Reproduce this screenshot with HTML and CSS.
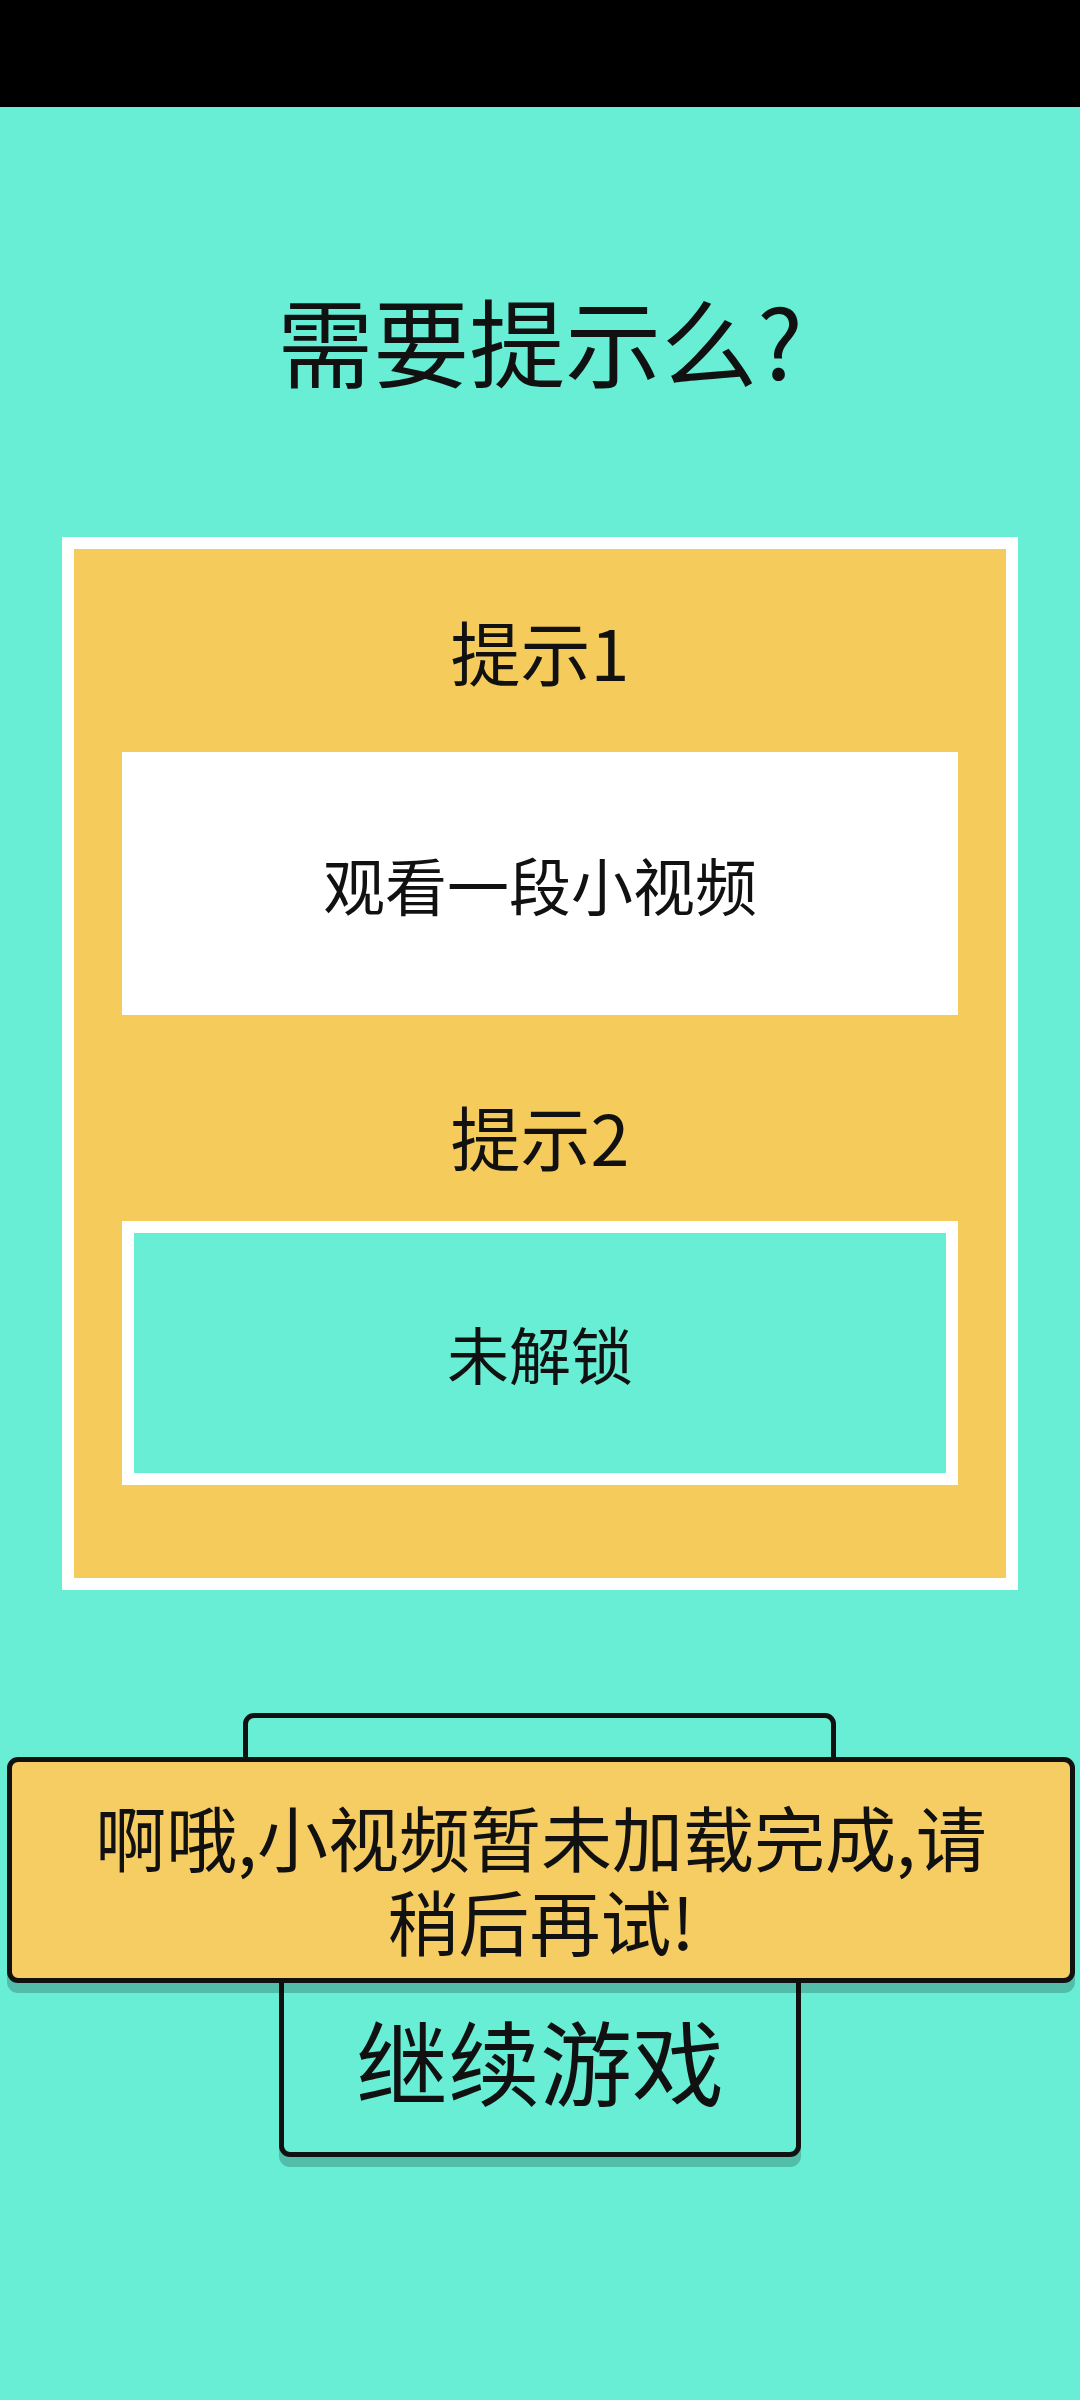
FILE: index.html
```html
<!DOCTYPE html>
<html lang="zh-CN">
<head>
<meta charset="utf-8">
<title>需要提示么?</title>
<link rel="stylesheet" href="styles.css">
</head>
<body>
<div class="screen">
  <div class="statusbar"></div>
  <h1 class="title">需要提示么?</h1>
  <div class="card">
    <div class="hint-label first">提示1</div>
    <div class="hint-box open">观看一段小视频</div>
    <div class="hint-label second">提示2</div>
    <div class="hint-box locked">未解锁</div>
  </div>
  <div class="actions">
    <div class="btn btn-top"></div>
    <div class="btn btn-continue">继续游戏</div>
  </div>
  <div class="toast"><span class="toast-line">啊哦,小视频暂未加载完成,请</span><span class="toast-line">稍后再试!</span></div>
</div>
</body>
</html>
```
FILE: styles.css
```css
* { box-sizing: border-box; }
html, body {
  margin: 0;
  padding: 0;
  background: #67eed4;
}
body {
  font-family: "Noto Sans CJK SC", "Noto Sans", sans-serif;
  color: #111;
}
.screen {
  position: relative;
  width: 1080px;
  height: 2400px;
  overflow: hidden;
  display: flex;
  flex-direction: column;
  align-items: center;
}
.statusbar {
  align-self: stretch;
  height: 107px;
  background: #000;
}
.title {
  margin: 172px 0 0;
  font-size: 96px;
  line-height: 120px;
  font-weight: 400;
  text-align: center;
}
.card {
  margin-top: 138px;
  width: 956px;
  border: 12px solid #fff;
  background: #f5cb5b;
  padding: 0 48px 93px;
  display: flex;
  flex-direction: column;
}
.hint-label {
  font-size: 70px;
  line-height: 90px;
  text-align: center;
}
.hint-label.first { margin: 57px 0 56px; }
.hint-label.second { margin: 76px 0 40px; }
.hint-box {
  height: 263px;
  display: flex;
  align-items: center;
  justify-content: center;
  font-size: 62px;
  line-height: 80px;
}
.hint-box.open { background: #fff; }
.hint-box.locked {
  height: 264px;
  background: #67eed4;
  border: 12px solid #fff;
}
.actions {
  margin-top: 123px;
  display: flex;
  flex-direction: column;
  align-items: center;
  gap: 40px;
}
.btn {
  border: 5px solid #111;
  border-radius: 11px;
  background: #67eed4;
  box-shadow: 0 10px 0 rgba(0, 0, 0, 0.2);
}
.btn-top {
  width: 593px;
  height: 200px;
  margin-left: -2px;
}
.btn-continue {
  width: 522px;
  height: 204px;
  display: flex;
  align-items: center;
  justify-content: center;
  padding-top: 8px;
  font-size: 92px;
  line-height: 110px;
}
.toast {
  position: absolute;
  left: 7px;
  top: 1757px;
  width: 1068px;
  height: 226px;
  border: 5px solid #111;
  border-radius: 11px;
  background: #f6cd62;
  box-shadow: 0 10px 0 rgba(0, 0, 0, 0.2);
  display: flex;
  flex-direction: column;
  align-items: center;
  justify-content: center;
  padding-top: 14px;
  font-size: 71px;
  text-align: center;
}
.toast-line {
  display: block;
  line-height: 84px;
}
```
